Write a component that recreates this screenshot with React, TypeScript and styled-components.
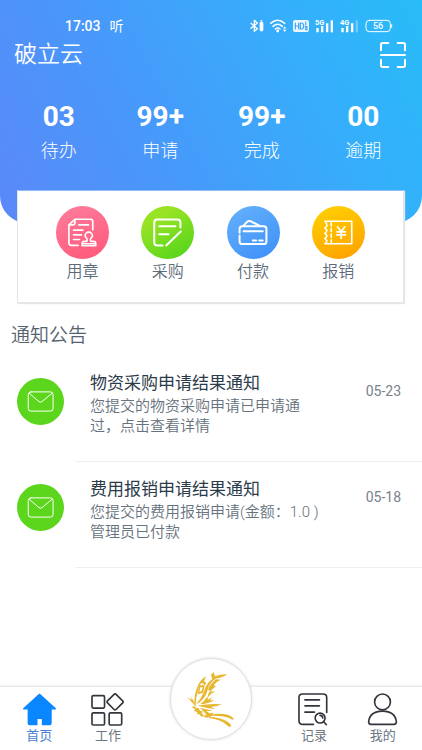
import React from "react";
import styled, { createGlobalStyle } from "styled-components";

const GlobalStyle = createGlobalStyle`
  * { box-sizing: border-box; }
  body {
    margin: 0;
    background: #fff;
    font-family: Roboto, "Noto Sans CJK SC", sans-serif;
    color: #2f3f50;
  }
  h1, h2, h3, p, ul { margin: 0; padding: 0; font-weight: inherit; }
  ul { list-style: none; }
  button { border: 0; padding: 0; background: none; font: inherit; color: inherit; cursor: pointer; }
  a { color: inherit; text-decoration: none; }
  svg { display: block; }
`;

const Page = styled.div`
  min-height: 100vh;
  display: flex;
  flex-direction: column;
`;

const Header = styled.header`
  padding-top: 16px;
  height: 223px;
  border-radius: 0 0 27px 27px;
  background: linear-gradient(62deg, #5b88f9 0%, #4898fa 35%, #36aefb 72%, #28bcf8 100%);
  color: #fff;
`;

const StatusBar = styled.div`
  display: flex;
  align-items: center;
  justify-content: space-between;
  height: 20px;
  padding: 0 29px 0 65px;
`;

const Clock = styled.div`
  display: flex;
  align-items: center;
  gap: 9px;
  font-size: 14px;
  line-height: 20px;
  font-weight: 500;
`;

const Listening = styled.span`
  font-weight: 400;
`;

const StatusIcons = styled.div`
  display: flex;
  align-items: center;
  gap: 6px;
`;

const TitleBar = styled.div`
  display: flex;
  align-items: center;
  justify-content: space-between;
  height: 38px;
  padding: 0 16px 0 14px;
`;

const Brand = styled.h1`
  font-size: 23px;
  line-height: 36px;
  font-weight: 350;
`;

const Stats = styled.div`
  display: grid;
  grid-template-columns: repeat(4, 1fr);
  padding: 26px 8px 0;
`;

const Stat = styled.a`
  display: flex;
  flex-direction: column;
  align-items: center;
`;

const StatValue = styled.strong`
  font-size: 28px;
  line-height: 34px;
  font-weight: 700;
`;

const StatLabel = styled.span`
  font-size: 18px;
  line-height: 34px;
  font-weight: 300;
`;

const Card = styled.nav`
  display: grid;
  grid-template-columns: repeat(4, 1fr);
  margin: -33px 18px 0 17px;
  padding: 15px 22px 17px;
  border: 1px solid #e4e7ea;
  border-top-color: #8fbdf0;
  background: #fff;
  box-shadow: 1px 1px 1px #e6e6e6;
`;

const Action = styled.button`
  display: flex;
  flex-direction: column;
  align-items: center;
  font-size: 16px;
  line-height: 26px;
  font-weight: 350;
  color: #5c6b7a;
`;

const Disc = styled.span<{ $fill: string; $size: number }>`
  display: block;
  flex: none;
  width: ${(p) => p.$size}px;
  height: ${(p) => p.$size}px;
  border-radius: 50%;
  background: ${(p) => p.$fill};
  color: #fff;
`;

const Icon = styled.svg`
  fill: none;
  stroke: currentColor;
  stroke-linecap: round;
  stroke-linejoin: round;
`;

const SectionTitle = styled.h2`
  padding: 17px 11px 4px;
  font-size: 19px;
  line-height: 32px;
  font-weight: 350;
  color: #56636f;
`;

const Notice = styled.li`
  display: flex;
  height: 106px;
  padding-left: 17px;
`;

const NoticeIcon = styled.div`
  width: 58px;
  padding-top: 22px;
`;

const NoticeBody = styled.div`
  flex: 1;
  display: flex;
  justify-content: space-between;
  padding: 14px 21px 0 15px;
  border-bottom: 1px solid #efefef;
`;

const NoticeText = styled.div`
  width: 240px;
`;

const NoticeTitle = styled.h3`
  font-size: 17px;
  line-height: 26px;
  font-weight: 400;
  color: #2c3b4a;
`;

const NoticeDetail = styled.p`
  font-size: 15px;
  line-height: 20px;
  font-weight: 350;
  color: #66727d;
`;

const NoticeDate = styled.time`
  padding-top: 12px;
  font-size: 14px;
  line-height: 18px;
  color: #77818b;
  white-space: nowrap;
`;

const TabBar = styled.nav`
  position: sticky;
  bottom: 0;
  display: grid;
  grid-template-columns: 1fr 1fr 2fr 1fr 1fr;
  height: 64px;
  margin-top: auto;
  padding: 0 5px;
  border-top: 1px solid #e9e9e9;
  background: #fff;
  box-shadow: 0 -1px 2px #f1f1f1;
`;

const Tab = styled.a<{ $active?: boolean }>`
  display: flex;
  flex-direction: column;
  align-items: center;
  padding-top: 6px;
  font-size: 13px;
  line-height: 20px;
  color: ${(p) => (p.$active ? "#4a7fd6" : "#6d7782")};
`;

const TabIcon = styled(Icon)<{ $active?: boolean }>`
  color: ${(p) => (p.$active ? "#0a86ff" : "#32363c")};
`;

const CenterButton = styled.button`
  display: flex;
  align-items: center;
  justify-content: center;
  justify-self: center;
  width: 82px;
  height: 82px;
  margin-top: -29px;
  border: 1px solid #e2e2e2;
  border-radius: 50%;
  background: #fff;
  box-shadow: 0 0 3px #d8d8d8;
`;

const BluetoothIcon = () => (
  <Icon width="14" height="14" viewBox="0 0 42 42" strokeWidth="4">
    <path d="M3 13 L22 29 L13 37 V4 L22 12 L3 28" />
    <rect x="30" y="9" width="9" height="27" rx="3" fill="currentColor" strokeWidth="2" />
    <path d="M33 5h3" strokeWidth="3" />
  </Icon>
);

const WifiIcon = () => (
  <Icon width="17" height="14" viewBox="0 0 51 42" strokeWidth="4.5">
    <path d="M2 13 Q23 -5 44 13 M9 22 Q23 9 37 22 M16 30 Q23 24 30 30" />
    <circle cx="23" cy="36" r="2" fill="currentColor" />
    <path d="M40 28l4-5 4 5z M40 33l4 5 4-5z" fill="currentColor" strokeWidth="1" />
  </Icon>
);

const HdIcon = () => (
  <Icon width="16" height="12" viewBox="0 0 48 36">
    <rect width="48" height="36" rx="6" fill="#e9f7ff" stroke="none" />
    <path d="M7 9v18M17 9v18M7 18h10M22 9v18h4q6-1 6-9t-6-9z M38 6v9 M37 20h5v4h-4v5h5" stroke="#3fa5f5" strokeWidth="3.5" />
  </Icon>
);

const Signal = ({ label, weak }: { label: string; weak?: boolean }) => (
  <svg width="19" height="14" viewBox="0 0 57 42" fill="#fff" role="img" aria-label={label}>
    <text x="0" y="17" fontSize="22" fontWeight="700" fontFamily="Roboto, sans-serif">{label}</text>
    <path d="M4 27h7v13H4z M18 21h7v19h-7z M33 13h7v27h-7z" />
    <path d="M47 4h7v36h-7z" opacity={weak ? 0.3 : 1} />
  </svg>
);

const BatteryIcon = () => (
  <Icon width="28" height="14" viewBox="0 0 84 42" strokeWidth="3">
    <rect x="3" y="4" width="73" height="34" rx="10" />
    <path d="M80 17v8" strokeWidth="3" />
    <text x="39" y="30" textAnchor="middle" fill="#fff" stroke="none" fontSize="27" fontWeight="500" fontFamily="Roboto, sans-serif">56</text>
  </Icon>
);

const ScanIcon = () => (
  <Icon width="26" height="26" viewBox="0 0 78 78" strokeWidth="6">
    <path d="M3 25V8q0-5 5-5h17 M53 3h17q5 0 5 5v17 M75 53v17q0 5-5 5H53 M25 75H8q-5 0-5-5V53 M3 39h72" />
  </Icon>
);

const SealIcon = () => (
  <Icon viewBox="0 0 160 160" strokeWidth="5">
    <path d="M39 57 L57 40 H104 Q111 40 111 47 V72 M39 57 V111 Q39 119 47 119 H67 M39 57 H52 Q57 57 57 52 V40" />
    <path d="M69 57h29 M53 73h28 M53 87h24 M53 101h18" />
    <path d="M93 107 Q96 101 93 98 Q88 94 88 90 A11 11 0 0 1 110 90 Q110 94 105 98 Q102 101 105 107 H113 Q120 107 120 114 V120 H79 V114 Q79 107 86 107 Z M80 114h39" />
  </Icon>
);

const PurchaseIcon = () => (
  <Icon viewBox="0 0 160 160" strokeWidth="6">
    <path d="M119 65 V50 Q119 41 110 41 H49 Q40 41 40 50 V110 Q40 119 49 119 H65" />
    <path d="M55 61h49 M55 85h28 M76 119 L120 77" />
  </Icon>
);

const WalletIcon = () => (
  <Icon viewBox="0 0 160 160" strokeWidth="6">
    <path d="M38 81 V69 Q38 61 46 61 H111 Q119 61 119 69 V107 Q119 115 111 115 H46 Q38 115 38 107 V89" />
    <path d="M49 60 L62 47 Q66 44 71 46 L99 60 M50 76h58 M78 104h10 M97 104h11" />
  </Icon>
);

const VoucherIcon = () => (
  <Icon viewBox="0 0 160 160" strokeWidth="5">
    <path d="M39 46 H120 V114 H39 Q45 108 45 105 L39 98 Q45 94 45 89 L39 82 Q45 78 45 73 L39 66 Q45 62 45 57 Q45 52 39 46 Z" />
    <path d="M58 51v9 M58 68v9 M58 85v9 M58 102v8" />
    <path d="M77 63 L88 77 L99 63 M88 77V98 M75 78h26 M75 87h26" />
  </Icon>
);

const MailIcon = () => (
  <Icon viewBox="0 0 142 142" strokeWidth="3">
    <rect x="34" y="42" width="75" height="58" rx="8" />
    <path d="M37 46 L66 71 Q71 75 76 71 L106 46" />
  </Icon>
);

const ButterflyIcon = () => (
  <svg width="46" height="55" viewBox="84 66 138 165" fill="#e8b730" aria-hidden="true">
    <path d="M104 164 Q101 138 111 114 Q117 92 138 79 L132 94 L139 99 L131 110 Q134 99 125 99 Q117 103 114 122 Q108 140 108 158 Z" />
    <path d="M117 106 L134 106 L130 128 L113 133 Z M121 112 L118 126 L125 123 L128 112 Z" fillRule="evenodd" />
    <path d="M108 163 Q122 148 132 126 Q136 103 157 87 L153 74 L161 66 L165 79 Q182 72 201 73 Q187 84 170 85 Q152 95 145 113 Q141 131 132 144 Q122 157 108 163 Z" />
    <path d="M168 88 L184 89 Q167 95 161 106 L168 109 Q157 116 152 125 L166 124 Q151 131 143 143 Q144 131 151 121 L144 121 Q147 105 168 88 Z" />
    <path d="M120 163 Q134 154 142 139 L144 149 L157 141 L150 151 L162 151 Q145 162 120 163 Z" />
    <path d="M113 167 Q148 160 185 163 Q171 171 152 170 L167 177 Q141 175 113 167 Z" />
    <path d="M106 170 Q101 160 94 155 L83 142 L96 150 L91 137 Q99 149 108 166 Z" />
    <path d="M95 171 Q103 165 108 173 L116 175 L120 182 L130 185 L124 190 L131 194 L125 201 L118 193 L111 192 L112 186 L102 183 L106 178 Z" />
    <path d="M121 174 Q139 177 159 183 L139 183 L149 190 L161 188 Q157 200 140 203 L126 198 L140 195 Q132 186 121 174 Z" />
    <path d="M150 194 Q181 188 203 194 Q218 199 222 208 Q215 210 208 204 Q187 196 150 197 Z" />
    <path d="M147 200 Q181 202 203 215 Q214 222 214 229 Q206 232 200 225 Q183 209 147 204 Z" />
  </svg>
);

const HomeIcon = () => (
  <TabIcon $active width="33" height="33" viewBox="0 0 100 100" strokeWidth="4">
    <path d="M50 4 L98 48 H85 V90 Q85 96 79 96 H59 V77 H42 V96 H22 Q16 96 16 90 V48 H2 Z" fill="currentColor" />
  </TabIcon>
);

const WorkIcon = () => (
  <TabIcon width="33" height="33" viewBox="0 0 100 100" strokeWidth="5">
    <rect x="3" y="8" width="38" height="38" rx="4" />
    <rect x="3" y="60" width="38" height="37" rx="4" />
    <rect x="55" y="60" width="38" height="37" rx="4" />
    <path d="M70 4 Q73 1 76 4 L96 24 Q99 27 96 30 L76 50 Q73 53 70 50 L50 30 Q47 27 50 24 Z" />
  </TabIcon>
);

const RecordIcon = () => (
  <TabIcon width="33" height="33" viewBox="0 0 100 100" strokeWidth="5">
    <path d="M90 59 V14 Q90 3 79 3 H17 Q6 3 6 14 V84 Q6 95 17 95 H50" />
    <path d="M24 21h44 M24 39h44 M24 58h29" />
    <circle cx="70" cy="76" r="15" />
    <path d="M81 87 L89 96 M70 68 Q78 69 78 76" />
  </TabIcon>
);

const ProfileIcon = () => (
  <TabIcon width="33" height="33" viewBox="0 0 100 100" strokeWidth="5">
    <circle cx="50" cy="27" r="24" />
    <path d="M8 88 Q11 55 50 55 Q89 55 92 88 Q92 95 85 95 H15 Q8 95 8 88 Z" />
  </TabIcon>
);

const stats = [
  { value: "03", label: "待办" },
  { value: "99+", label: "申请" },
  { value: "99+", label: "完成" },
  { value: "00", label: "逾期" },
];

const actions = [
  { label: "用章", icon: <SealIcon />, fill: "linear-gradient(160deg, #ff7d9c, #ff5878)" },
  { label: "采购", icon: <PurchaseIcon />, fill: "linear-gradient(150deg, #98e324 25%, #56d51c 90%)" },
  { label: "付款", icon: <WalletIcon />, fill: "linear-gradient(150deg, #66b2fb, #3c8ff9)" },
  { label: "报销", icon: <VoucherIcon />, fill: "linear-gradient(160deg, #ffcb00 15%, #ff9f00)" },
];

const notices = [
  { title: "物资采购申请结果通知", detail: ["您提交的物资采购申请已申请通", "过，点击查看详情"], date: "05-23" },
  { title: "费用报销申请结果通知", detail: ["您提交的费用报销申请(金额：1.0 )", "管理员已付款"], date: "05-18" },
];

export default function App() {
  return (
    <Page lang="zh-CN">
      <GlobalStyle />
      <Header>
        <StatusBar>
          <Clock>
            <span>17:03</span>
            <Listening>听</Listening>
          </Clock>
          <StatusIcons>
            <BluetoothIcon />
            <WifiIcon />
            <HdIcon />
            <Signal label="5G" />
            <Signal label="4G" weak />
            <BatteryIcon />
          </StatusIcons>
        </StatusBar>
        <TitleBar>
          <Brand>破立云</Brand>
          <button aria-label="扫一扫"><ScanIcon /></button>
        </TitleBar>
        <Stats>
          {stats.map((s) => (
            <Stat href="#" key={s.label}>
              <StatValue>{s.value}</StatValue>
              <StatLabel>{s.label}</StatLabel>
            </Stat>
          ))}
        </Stats>
      </Header>
      <Card>
        {actions.map((a) => (
          <Action key={a.label}>
            <Disc $fill={a.fill} $size={53}>{a.icon}</Disc>
            {a.label}
          </Action>
        ))}
      </Card>
      <SectionTitle>通知公告</SectionTitle>
      <ul>
        {notices.map((n) => (
          <Notice key={n.title}>
            <NoticeIcon>
              <Disc $fill="#5cd61c" $size={47}><MailIcon /></Disc>
            </NoticeIcon>
            <NoticeBody>
              <NoticeText>
                <NoticeTitle>{n.title}</NoticeTitle>
                <NoticeDetail>{n.detail[0]}<br />{n.detail[1]}</NoticeDetail>
              </NoticeText>
              <NoticeDate>{n.date}</NoticeDate>
            </NoticeBody>
          </Notice>
        ))}
      </ul>
      <TabBar>
        <Tab href="#" $active><HomeIcon />首页</Tab>
        <Tab href="#"><WorkIcon />工作</Tab>
        <CenterButton aria-label="破立云"><ButterflyIcon /></CenterButton>
        <Tab href="#"><RecordIcon />记录</Tab>
        <Tab href="#"><ProfileIcon />我的</Tab>
      </TabBar>
    </Page>
  );
}
